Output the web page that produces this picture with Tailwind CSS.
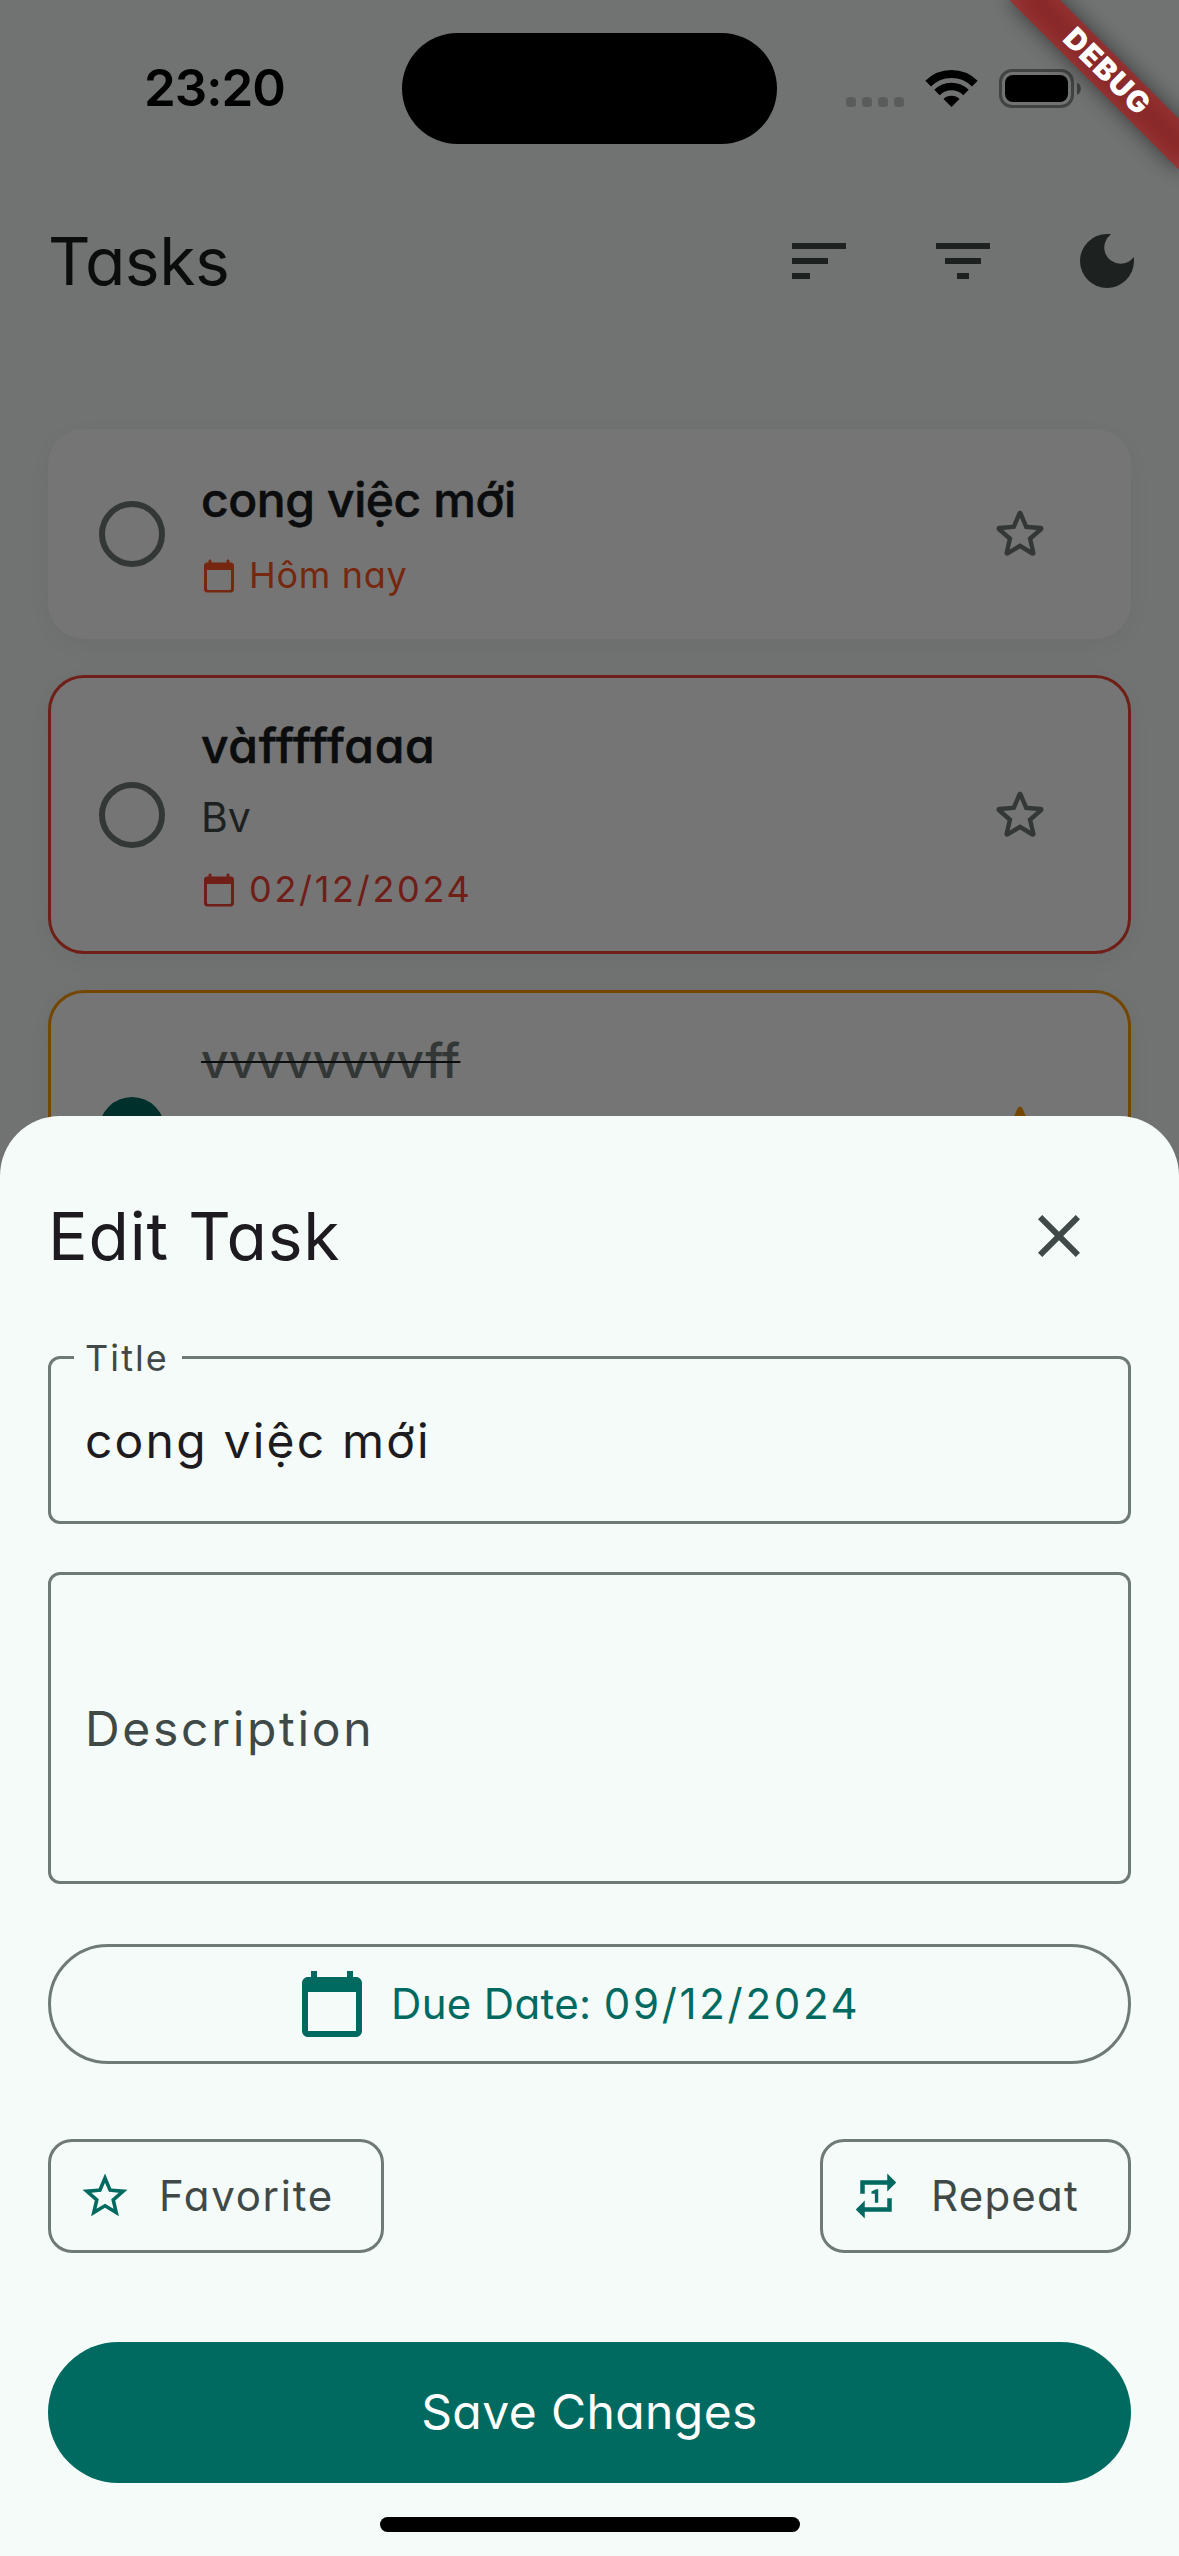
<!DOCTYPE html>
<html lang="en">
<head>
<meta charset="utf-8">
<title>Tasks</title>
<script src="https://cdn.jsdelivr.net/npm/@tailwindcss/browser@4"></script>
</head>
<body class="bg-[#f4fbf8] font-['Inter',sans-serif] [font-feature-settings:'cv11'_1]">
<svg class="hidden">
  <symbol id="star" viewBox="0 0 24 24"><path d="M19.65 9.04l-4.84-.42-1.89-4.45c-.34-.81-1.5-.81-1.84 0L9.19 8.63l-4.83.41c-.88.07-1.24 1.17-.57 1.75l3.67 3.18-1.1 4.72c-.2.86.73 1.54 1.49 1.08l4.15-2.5 4.15 2.51c.76.46 1.69-.22 1.49-1.08l-1.1-4.73 3.67-3.18c.67-.58.32-1.68-.56-1.75zM12 15.4l-3.76 2.27 1-4.28-3.32-2.88 4.38-.38L12 6.1l1.71 4.04 4.38.38-3.32 2.88 1 4.28L12 15.4z"/></symbol>
  <symbol id="calendar" viewBox="0 0 24 24"><path d="M20 3h-1V2c0-.55-.45-1-1-1s-1 .45-1 1v1H7V2c0-.55-.45-1-1-1s-1 .45-1 1v1H4c-1.1 0-2 .9-2 2v16c0 1.1.9 2 2 2h16c1.1 0 2-.9 2-2V5c0-1.1-.9-2-2-2zm-1 18.4H5c-.75 0-1-.45-1-1V8h16v12.4c0 .55-.25 1-1 1z"/></symbol>
</svg>
<div class="relative h-[2556px] w-[1179px] overflow-hidden">

  <!-- Task list screen -->
  <div class="h-full bg-[#f4fbf8] pt-[222px]">
    <header class="flex h-[78px] items-center pl-12 pr-9 text-[#3f4947]">
      <h1 class="flex-1 text-[66px] leading-[78px] tracking-[-0.5px] text-[#161d1b]">Tasks</h1>
      <div class="flex gap-[72px]">
        <svg class="size-[72px]" viewBox="0 0 24 24" fill="currentColor"><path d="M3 6h18v2H3zM3 11h12v2H3zM3 16h6v2H3z"/></svg>
        <svg class="size-[72px]" viewBox="0 0 24 24" fill="currentColor"><path d="M3 6h18v2H3zM6 11h12v2H6zM10 16h4v2h-4z"/></svg>
        <svg class="size-[72px]" viewBox="0 0 24 24" fill="currentColor"><path d="M12 3a9 9 0 1 0 9 9c0-.46-.04-.92-.1-1.36a5.389 5.389 0 0 1-4.4 2.26 5.403 5.403 0 0 1-3.14-9.8c-.44-.06-.9-.1-1.36-.1z"/></svg>
      </div>
    </header>

    <main class="mt-[129px] flex flex-col gap-9 px-12">
      <article class="flex h-[210px] items-center rounded-[36px] border-3 border-transparent bg-white pl-12 pr-[75px] shadow-[0_6px_30px_rgba(0,0,0,0.05)]">
        <span class="size-[66px] rounded-full border-6 border-[#6f7977]"></span>
        <div class="ml-9 flex-1 self-start pt-8">
          <h2 class="text-[48px] leading-[72px] font-medium tracking-[-0.42px] text-[#1a1c1e] [-webkit-text-stroke:0.6px]">cong việc mới</h2>
          <p class="mt-[17px] flex h-[45px] items-center gap-3 text-[36px] leading-[45px] tracking-[0.7px] text-[#ff5722]">
            <svg class="size-9" fill="currentColor"><use href="#calendar"/></svg>Hôm nay
          </p>
        </div>
        <svg class="size-[66px]" fill="#6f7977"><use href="#star"/></svg>
      </article>

      <article class="flex h-[279px] items-center rounded-[36px] border-3 border-[#f44336] bg-white pl-12 pr-[75px] shadow-[0_6px_30px_rgba(0,0,0,0.05)]">
        <span class="size-[66px] rounded-full border-6 border-[#6f7977]"></span>
        <div class="ml-9 flex-1 self-start pt-8">
          <h2 class="text-[48px] leading-[72px] font-medium tracking-[0.7px] text-[#1a1c1e] [-webkit-text-stroke:0.6px]">vàfffffaaa</h2>
          <p class="mt-[5px] text-[41px] leading-[60px] text-[#3f4947]">Bv</p>
          <p class="mt-5 flex h-[45px] items-center gap-3 text-[36px] leading-[45px] tracking-[2.7px] text-[#f44336]">
            <svg class="size-9" fill="currentColor"><use href="#calendar"/></svg>02/12/2024
          </p>
        </div>
        <svg class="size-[66px]" fill="#6f7977"><use href="#star"/></svg>
      </article>

      <article class="flex h-[279px] items-center rounded-[36px] border-3 border-[#ff9800] bg-white pl-12 pr-[75px] shadow-[0_6px_30px_rgba(0,0,0,0.05)]">
        <span class="size-[66px] rounded-full bg-[#006a60]"></span>
        <div class="ml-9 flex-1 self-start pt-8">
          <h2 class="text-[48px] leading-[72px] font-medium tracking-[0.35px] text-[#6f7977]"><span class="line-through decoration-[#1a1c1e] decoration-2">vvvvvvvvff</span></h2>
        </div>
        <svg class="size-[66px]" viewBox="0 0 24 24" fill="#ff9800"><path d="M12 17.27l4.15 2.51c.76.46 1.69-.22 1.49-1.08l-1.1-4.72 3.67-3.18c.67-.58.31-1.68-.57-1.75l-4.83-.41-1.89-4.46c-.34-.81-1.5-.81-1.84 0L9.19 8.63l-4.83.41c-.88.07-1.24 1.17-.57 1.75l3.67 3.18-1.1 4.72c-.2.86.73 1.54 1.49 1.08l4.15-2.5z"/></svg>
      </article>
    </main>
  </div>

  <!-- Scrim -->
  <div class="absolute inset-0 bg-black/54"></div>

  <!-- Edit sheet -->
  <section class="absolute inset-x-0 top-[1116px] bottom-0 rounded-t-[60px] bg-[#f4fbf8] px-12 pt-[81px]">
    <div class="flex h-[78px] items-center justify-between pr-9">
      <h2 class="text-[66px] leading-[78px] tracking-[0.8px] text-[#1d1b20]">Edit Task</h2>
      <svg class="size-[72px]" viewBox="0 0 24 24" fill="#3f4947"><path d="M19 6.41L17.59 5 12 10.59 6.41 5 5 6.41 10.59 12 5 17.59 6.41 19 12 13.41 17.59 19 19 17.59 13.41 12z"/></svg>
    </div>

    <div class="relative mt-[81px] h-[168px] rounded-xl border-3 border-[#6f7977] pt-[46px] pl-[34px]">
      <label class="absolute top-[-23px] left-[23px] w-[108px] bg-[#f4fbf8] pl-[11px] text-[36px] leading-[45px] tracking-[2.1px] text-[#3f4947]">Title</label>
      <p class="text-[48px] leading-[72px] tracking-[2.2px] text-[#1d1b20]">cong việc mới</p>
    </div>

    <div class="mt-12 flex h-[312px] items-center rounded-xl border-3 border-[#6f7977] pt-0.5 pl-[34px] text-[48px] leading-[72px] tracking-[2.7px] text-[#3f4947]">Description</div>

    <button class="mt-[60px] flex h-[120px] w-full items-center gap-[23px] rounded-full border-3 border-[#6f7977] pl-[245px] text-[42px] text-[#006a60]">
      <svg class="size-[72px]" viewBox="0 0 24 24" fill="currentColor"><path d="M20 3h-1V1h-2v2H7V1H5v2H4c-1.1 0-2 .9-2 2v16c0 1.1.9 2 2 2h16c1.1 0 2-.9 2-2V5c0-1.1-.9-2-2-2zm0 18H4V8h16v13z"/></svg>
      <span class="pb-0.5 tracking-[0.35px]">Due Date: <span class="tracking-[2.7px]">09/12/2024</span></span>
    </button>

    <div class="mt-[75px] flex justify-between text-[42px] text-[#3f4947]">
      <button class="flex h-[114px] w-[336px] items-center gap-[27px] rounded-3xl border-3 border-[#6f7977] pl-[27px] tracking-[1.7px]">
        <svg class="size-[54px]" viewBox="0 0 24 24" fill="#006a60"><path d="M22 9.24l-7.19-.62L12 2 9.19 8.63 2 9.24l5.46 4.73L5.82 21 12 17.27 18.18 21l-1.63-7.03L22 9.24zM12 15.4l-3.76 2.27 1-4.28-3.32-2.88 4.38-.38L12 6.1l1.71 4.04 4.38.38-3.32 2.88 1 4.28L12 15.4z"/></svg>
        <span class="pb-0.5">Favorite</span>
      </button>
      <button class="flex h-[114px] w-[311px] items-center gap-7 rounded-3xl border-3 border-[#6f7977] pl-[26px] tracking-[1.24px]">
        <svg class="size-[54px]" viewBox="0 0 24 24" fill="#006a60"><path d="M7 7h10v3l4-4-4-4v3H5v6h2V7zm10 10H7v-3l-4 4 4 4v-3h12v-6h-2v4zm-4-2V9h-1l-2 1v1h1.5v4H13z"/></svg>
        <span class="pb-0.5">Repeat</span>
      </button>
    </div>

    <button class="mt-[88.5px] h-[141px] w-full rounded-full bg-[#006a60] text-center text-[48px] tracking-[0.42px] text-white">Save Changes</button>
  </section>

  <!-- Status bar -->
  <div class="absolute inset-x-0 top-0 flex h-[177px] items-center">
    <div class="w-[402px] pb-0.5 pl-36 text-[51px] leading-[60px] font-semibold tracking-[-1px] text-black">23:20</div>
    <div class="h-[111px] w-[375px] rounded-full bg-black"></div>
    <svg class="ml-[69px] h-10 w-[236px]" viewBox="846 68 236 40">
      <g fill="#000" fill-opacity=".2"><rect x="846" y="96" width="10" height="10" rx="3.5"/><rect x="862" y="96" width="10" height="10" rx="3.5"/><rect x="878" y="96" width="10" height="10" rx="3.5"/><rect x="894" y="96" width="10" height="10" rx="3.5"/></g>
      <g fill="none" stroke="#000"><path d="M928.2 82.7a33 33 0 0 1 46.6 0" stroke-width="8"/><path d="M937 91.5a20.5 20.5 0 0 1 29 0" stroke-width="7.6"/></g>
      <path d="M951.5 106l-8-8.1a11.5 11.5 0 0 1 16 0z"/>
      <rect x="1000.5" y="69.5" width="72" height="36" rx="11.5" fill="none" stroke="#000" stroke-opacity=".42" stroke-width="3"/>
      <rect x="1005" y="74" width="63" height="27" rx="8"/>
      <path d="M1077 81.5c5 2 5 10.500 0 12.500z" fill-opacity=".45"/>
    </svg>
  </div>

  <!-- Debug ribbon -->
  <svg class="absolute top-0 right-0 size-[240px]" viewBox="-240 0 240 240">
    <filter id="soft" x="-50%" y="-150%" width="200%" height="400%"><feGaussianBlur stdDeviation="11"/></filter>
    <g transform="rotate(45)">
      <rect x="-120" y="84" width="240" height="36" fill-opacity=".5" filter="url(#soft)"/>
      <rect x="-122" y="84" width="244" height="36" fill="#b71c1c" fill-opacity=".63"/>
      <text x="0" y="111.500" text-anchor="middle" class="fill-white text-[29.5px] font-black tracking-[1.3px]">DEBUG</text>
    </g>
  </svg>

  <!-- Home indicator -->
  <div class="absolute top-[2517px] left-[380px] h-[15px] w-[420px] rounded-full bg-black"></div>
</div>
</body>
</html>
